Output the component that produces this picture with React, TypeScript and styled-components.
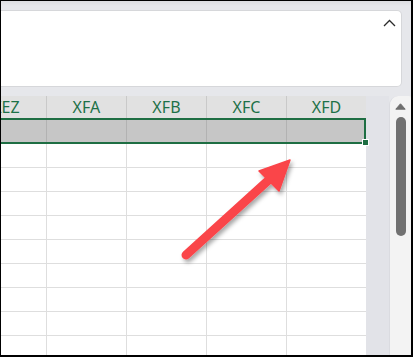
import styled, { createGlobalStyle } from "styled-components";

const GlobalStyle = createGlobalStyle`
  html, body {
    margin: 0;
    padding: 0;
    background: #ffffff;
  }
  * {
    box-sizing: border-box;
  }
`;

const Frame = styled.div`
  position: relative;
  width: 413px;
  height: 357px;
  overflow: hidden;
  display: flex;
  flex-direction: column;
  background: linear-gradient(#dcdde1 0px, #e6e7eb 5px, #e6e7eb 100%);
  border-style: solid;
  border-color: #000000;
  border-width: 1px 2px 2px 1px;
  font-family: "Noto Sans", "Open Sans", sans-serif;
`;

const FormulaPanel = styled.div`
  margin: 9px 9px 0 0;
  height: 77px;
  flex: none;
  display: flex;
  justify-content: flex-end;
  align-items: flex-start;
  padding: 8px 5px 0 0;
  background: #ffffff;
  border: 1px solid #d6d7da;
  border-left: none;
  border-radius: 0 5px 5px 0;
`;

const Workspace = styled.div`
  flex: 1;
  margin-top: 9px;
  display: flex;
  min-height: 0;
`;

const Sheet = styled.div`
  position: relative;
  width: 365px;
  flex: none;
  background: #ffffff;
  display: flex;
  flex-direction: column;
`;

const Row = styled.div<{ $h: number }>`
  display: grid;
  grid-template-columns: repeat(5, 80px);
  margin-left: -35px;
  height: ${(p) => p.$h}px;
  flex: none;
`;

const HeaderCell = styled.div<{ $first?: boolean }>`
  display: flex;
  align-items: center;
  justify-content: center;
  background: #e1e1e1;
  color: #1d7148;
  font-size: 16px;
  letter-spacing: 0.1px;
  border-left: ${(p) => (p.$first ? "none" : "1px solid #c9c9c9")};
  padding-bottom: 1px;
`;

const SelectedRow = styled.div`
  position: relative;
  height: 26px;
  flex: none;
  border-top: 2px solid #1e6e43;
  border-bottom: 2px solid #1e6e43;
  border-right: 2px solid #1e6e43;
  background: #c6c6c6;
`;

const SelectedCells = styled.div`
  display: grid;
  grid-template-columns: repeat(5, 80px);
  margin-left: -35px;
  height: 100%;
`;

const SelectedCell = styled.div<{ $first?: boolean }>`
  border-left: ${(p) => (p.$first ? "none" : "1px solid #b2b2b2")};
`;

const Handle = styled.div`
  position: absolute;
  right: -5px;
  bottom: -4px;
  width: 7px;
  height: 7px;
  background: #1e6e43;
  border: 1px solid #ffffff;
`;

const Cell = styled.div<{ $first?: boolean }>`
  border-left: ${(p) => (p.$first ? "none" : "1px solid #dedede")};
  border-bottom: 1px solid #dedede;
`;

const Gutter = styled.div`
  width: 23px;
  flex: none;
  background: #e2e3e8;
`;

const ScrollTrack = styled.div`
  flex: 1;
  display: flex;
  flex-direction: column;
  align-items: center;
  padding-top: 7px;
  gap: 7px;
  background: #f3f3f3;
  border-left: 1px solid #dadbe0;
  border-top-left-radius: 9px;
  border-top-right-radius: 2px;
`;

const ScrollThumb = styled.div`
  width: 10px;
  height: 119px;
  border-radius: 5px;
  background: #717171;
  margin-left: 1px;
`;

const ArrowLayer = styled.svg`
  position: absolute;
  left: -1px;
  top: -1px;
  pointer-events: none;
`;

const columns = ["XEZ", "XFA", "XFB", "XFC", "XFD"];
const bodyRows = 9;

export default function App() {
  return (
    <>
      <GlobalStyle />
      <Frame>
        <FormulaPanel>
          <svg width="13" height="8" viewBox="0 0 13 8">
            <polyline
              points="1,7 6.5,1.5 12,7"
              fill="none"
              stroke="#2b2b2b"
              strokeWidth="1.3"
            />
          </svg>
        </FormulaPanel>
        <Workspace>
          <Sheet>
            <Row $h={22}>
              {columns.map((c, i) => (
                <HeaderCell key={c} $first={i === 0}>
                  {c}
                </HeaderCell>
              ))}
            </Row>
            <SelectedRow>
              <SelectedCells>
                {columns.map((c, i) => (
                  <SelectedCell key={c} $first={i === 0} />
                ))}
              </SelectedCells>
              <Handle />
            </SelectedRow>
            {Array.from({ length: bodyRows }).map((_, r) => (
              <Row $h={24} key={r}>
                {columns.map((c, i) => (
                  <Cell key={c} $first={i === 0} />
                ))}
              </Row>
            ))}
          </Sheet>
          <Gutter />
          <ScrollTrack>
            <svg width="11" height="7" viewBox="0 0 11 7">
              <path
                d="M5.5 0.8 L10.2 6.2 L0.8 6.2 Z"
                fill="#6e6e6e"
                stroke="#6e6e6e"
                strokeWidth="1"
                strokeLinejoin="round"
              />
            </svg>
            <ScrollThumb />
          </ScrollTrack>
        </Workspace>
        <ArrowLayer width="413" height="357" viewBox="0 0 413 357">
          <defs>
            <filter id="shadow" x="-20%" y="-20%" width="140%" height="140%">
              <feDropShadow
                dx="2"
                dy="3"
                stdDeviation="2"
                floodColor="#000000"
                floodOpacity="0.35"
              />
            </filter>
          </defs>
          <g filter="url(#shadow)" fill="#fa4449" stroke="#fa4449">
            <line
              x1="186"
              y1="255"
              x2="272"
              y2="177"
              strokeWidth="9"
              strokeLinecap="round"
            />
            <polygon
              points="290,160 279,191 259,171"
              strokeWidth="1.5"
              strokeLinejoin="round"
            />
          </g>
        </ArrowLayer>
      </Frame>
    </>
  );
}
